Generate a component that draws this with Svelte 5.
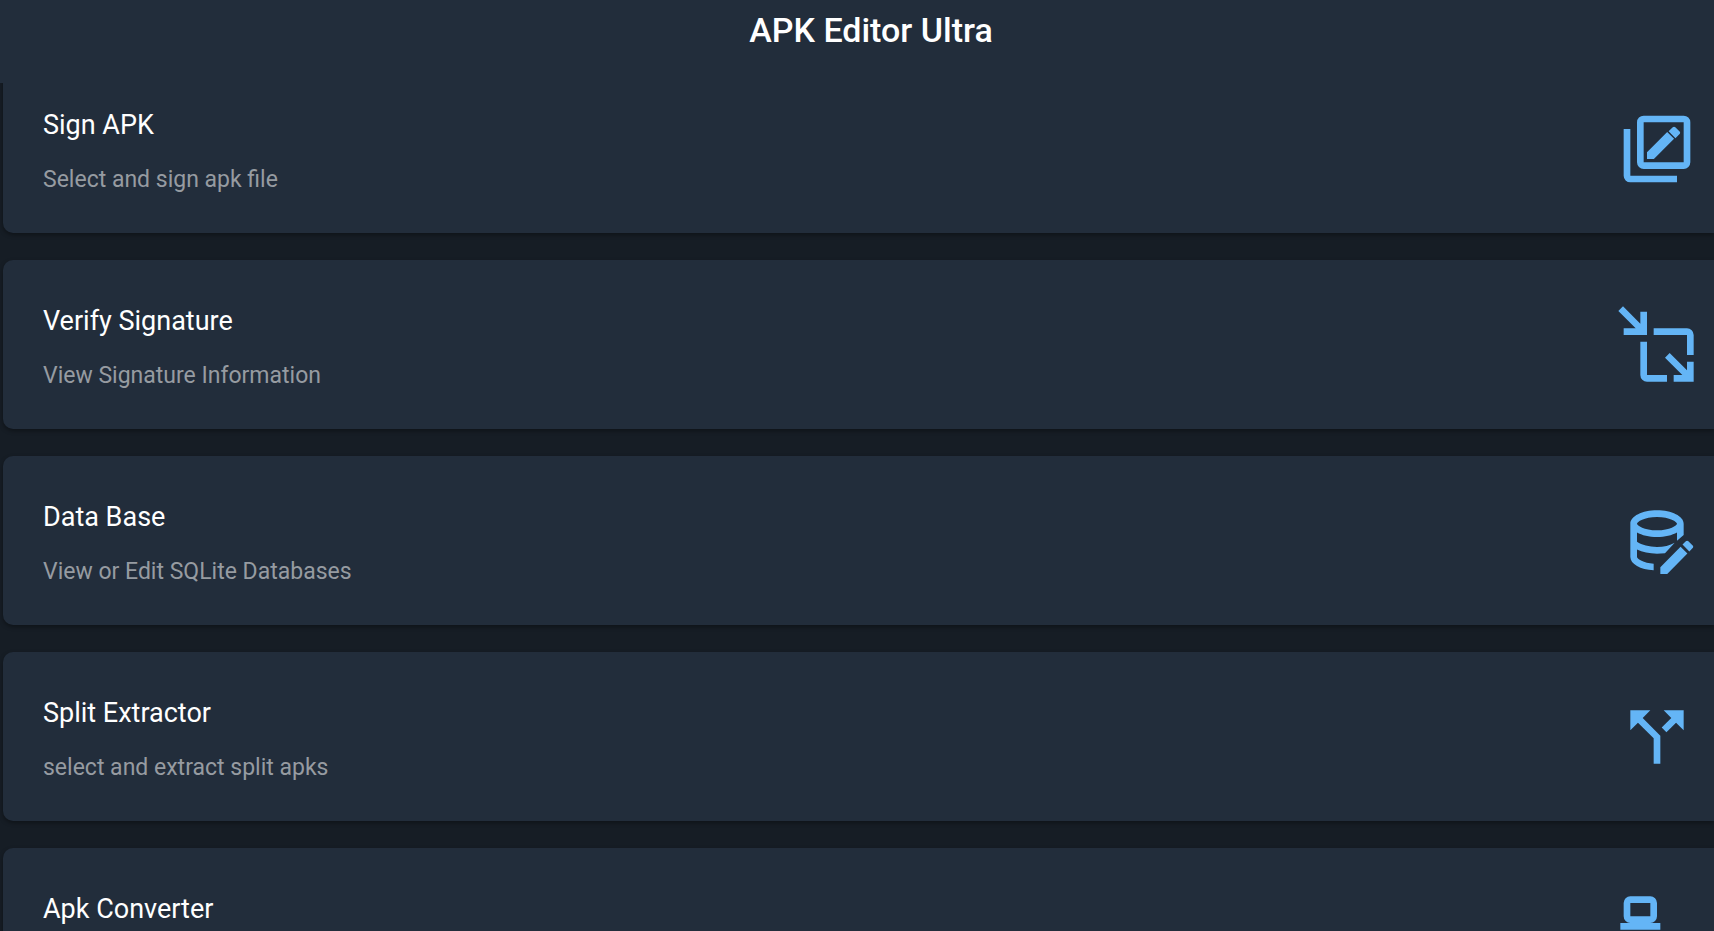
<script lang="ts">
  interface Tool {
    id: string;
    title: string;
    description: string;
    icon: string;
  }

  const tools: Tool[] = [
    {
      id: 'sign',
      title: 'Sign APK',
      description: 'Select and sign apk file',
      icon: 'M8 2h12a2 2 0 0 1 2 2v12a2 2 0 0 1-2 2H8a2 2 0 0 1-2-2V4a2 2 0 0 1 2-2zM8 4v12h12V4zM4 6v14h14v2H4a2 2 0 0 1-2-2V6zM18.78 7.5l-1.25 1.25-2.05-2.05 1.25-1.25c.21-.21.55-.21.77 0l1.28 1.28c.21.22.21.56 0 .77zM9 12.94l6.06-6.06 2.06 2.06L11.06 15H9z'
    },
    {
      id: 'verify',
      title: 'Verify Signature',
      description: 'View Signature Information',
      icon: 'M9 2v7H2V7h3.6L.4 1.8 1.8.4 7 5.6V2zM11 7h10a2 2 0 0 1 2 2v6h-2V9H11zM7 11v10a2 2 0 0 0 2 2h6v-2H9V11zM23 17v6h-6v-2h2.6l-5.2-5.2 1.4-1.4 5.2 5.2V17z'
    },
    {
      id: 'database',
      title: 'Data Base',
      description: 'View or Edit SQLite Databases',
      icon: 'M12 2.8C7.58 2.8 4 4.6 4 6.8v10c0 2.1 3 3.8 7 4v-2c-3-.2-5-1.4-5-2v-2.23c1.6.8 3.7 1.23 6 1.23.7 0 1.5-.05 2.4-.15l2.9-3.15C15.9 13.3 14 13.8 12 13.8c-2.4 0-4.5-.6-6-1.55V9.44c1.47.83 3.6 1.36 6 1.36s4.53-.53 6-1.36v2.46l2-1.7V6.8c0-2.21-3.58-4-8-4zM12 4.8c3.87 0 6 1.5 6 2s-2.13 2-6 2-6-1.5-6-2 2.13-2 6-2zM21.04 11.9c.14 0 .27.06.38.17l1.28 1.28c.22.21.22.56 0 .77l-1 1-2.05-2.05 1-1c.11-.11.25-.17.39-.17zM19.07 13.7l2.05 2.05L15.06 21.9H13v-2.06z'
    },
    {
      id: 'split',
      title: 'Split Extractor',
      description: 'select and extract split apks',
      icon: 'M14 4l2.29 2.29-2.88 2.88 1.42 1.42 2.88-2.88L20 10V4zM10 4H4v6l2.29-2.29L11 12.41V20h2v-8.41l-5.29-5.3z'
    },
    {
      id: 'convert',
      title: 'Apk Converter',
      description: '',
      icon: 'M4 1h6a2 2 0 0 1 2 2v4a2 2 0 0 1-2 2h3v2H1V9h3a2 2 0 0 1-2-2V3a2 2 0 0 1 2-2zM4 3v4h6V3z'
    }
  ];
</script>

<svelte:head>
  <title>APK Editor Ultra</title>
</svelte:head>

<div class="app">
  <header class="toolbar">
    <h1>APK Editor Ultra</h1>
  </header>

  <main class="list">
    {#each tools as tool (tool.id)}
      <button class="card" type="button">
        <span class="text">
          <span class="title">{tool.title}</span>
          {#if tool.description}
            <span class="description">{tool.description}</span>
          {/if}
        </span>
        <svg class="icon" viewBox="0 0 24 24" aria-hidden="true">
          <path d={tool.icon} fill-rule="evenodd" />
        </svg>
      </button>
    {/each}
  </main>
</div>

<style>
  :global(body) {
    margin: 0;
    background: #161d25;
  }

  .app {
    height: 100vh;
    overflow: hidden;
    background: #161d25;
    color: #fff;
    font-family: Roboto, sans-serif;
  }

  .toolbar {
    position: relative;
    z-index: 1;
    box-sizing: border-box;
    height: 83px;
    padding: 10px 0 0 28px;
    background: #222d3b;
    text-align: center;
  }

  h1 {
    margin: 0;
    font-size: 34px;
    line-height: 40px;
    font-weight: 500;
  }

  /* the list is scrolled a little way under the toolbar */
  .list {
    display: flex;
    flex-direction: column;
    gap: 27px;
    margin-top: -19px;
    padding-left: 3px;
  }

  .card {
    display: flex;
    align-items: center;
    justify-content: space-between;
    box-sizing: border-box;
    width: 100%;
    height: 169px;
    padding: 0 17px 0 40px;
    border: none;
    border-radius: 10px 0 0 10px;
    background: #222d3b;
    box-shadow: 0 2px 4px rgba(0, 0, 0, 0.35);
    color: inherit;
    font-family: inherit;
    text-align: left;
    cursor: pointer;
  }

  .text {
    display: flex;
    flex-direction: column;
    align-self: flex-start;
    gap: 25px;
    padding-top: 45px;
  }

  .title {
    font-size: 27px;
    line-height: 32px;
  }

  .description {
    color: #969ba1;
    font-size: 23px;
    line-height: 28px;
  }

  .icon {
    flex: none;
    width: 80px;
    height: 80px;
    fill: #64b5f6;
  }
</style>
